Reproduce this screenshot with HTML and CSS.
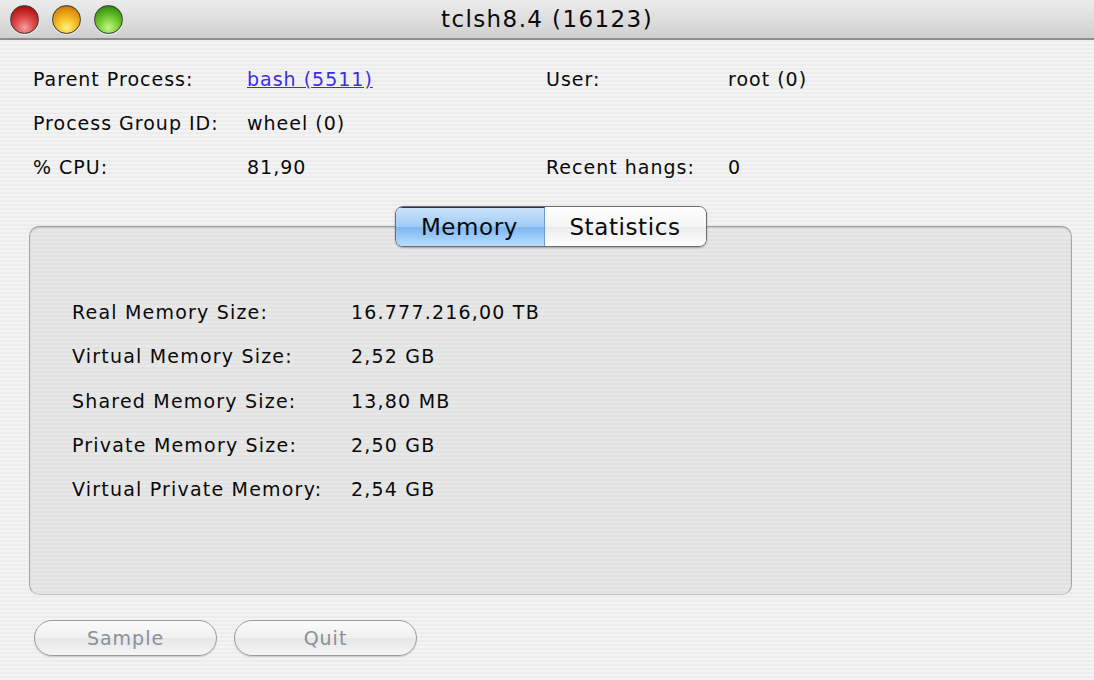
FILE: index.html
```html
<!DOCTYPE html>
<html>
<head>
<meta charset="utf-8">
<link rel="stylesheet" href="styles.css">
</head>
<body>
<div class="window">
  <div class="titlebar">
    <div class="lights">
      <span class="light red"></span>
      <span class="light yellow"></span>
      <span class="light green"></span>
    </div>
    <div class="title">tclsh8.4 (16123)</div>
  </div>
  <div class="content">
    <div class="info">
      <div class="lbl">Parent Process:</div>
      <div class="val"><a class="link" href="#">bash (5511)</a></div>
      <div class="lbl">User:</div>
      <div class="val">root (0)</div>
      <div class="lbl">Process Group ID:</div>
      <div class="val">wheel (0)</div>
      <div class="lbl"></div>
      <div class="val"></div>
      <div class="lbl">% CPU:</div>
      <div class="val">81,90</div>
      <div class="lbl">Recent hangs:</div>
      <div class="val">0</div>
    </div>
    <div class="tabbox">
      <div class="segmented">
        <div class="seg active">Memory</div>
        <div class="seg">Statistics</div>
      </div>
      <div class="memgrid">
        <div>Real Memory Size:</div><div>16.777.216,00 TB</div>
        <div>Virtual Memory Size:</div><div>2,52 GB</div>
        <div>Shared Memory Size:</div><div>13,80 MB</div>
        <div>Private Memory Size:</div><div>2,50 GB</div>
        <div>Virtual Private Memory:</div><div>2,54 GB</div>
      </div>
    </div>
    <div class="buttons">
      <button class="btn">Sample</button>
      <button class="btn">Quit</button>
    </div>
  </div>
</div>
</body>
</html>
```
FILE: styles.css
```css
html, body {
  margin: 0;
  padding: 0;
}
body {
  width: 1094px;
  height: 680px;
  overflow: hidden;
  font-family: "DejaVu Sans", "Liberation Sans", sans-serif;
  color: #0a0a0a;
}
.window {
  width: 1094px;
  height: 680px;
  display: flex;
  flex-direction: column;
  background: repeating-linear-gradient(to bottom, #ededed 0px, #ededed 2px, #f3f3f3 2px, #f3f3f3 4px);
}
.titlebar {
  height: 38px;
  border-bottom: 2px solid #8c8c8c;
  background: linear-gradient(to bottom, #ececec 0%, #dedede 50%, #cfcfcf 100%);
  display: flex;
  align-items: center;
  position: relative;
}
.lights {
  display: flex;
  gap: 13px;
  padding-left: 10px;
}
.light {
  width: 29px;
  height: 29px;
  border-radius: 50%;
  box-sizing: border-box;
  border: 1.5px solid #3a3a3a;
  box-shadow: 0 1px 1px rgba(255,255,255,0.6);
}
.red {
  background: radial-gradient(circle at 50% 80%, #f4a0a0 0%, #e05050 35%, #b81818 75%, #7a0a0a 100%);
}
.yellow {
  background: radial-gradient(circle at 50% 80%, #fff27a 0%, #f7c22a 35%, #d8880a 75%, #8a5200 100%);
}
.green {
  background: radial-gradient(circle at 50% 80%, #c8f58a 0%, #7cd23a 35%, #3e9a12 75%, #1f5a05 100%);
}
.title {
  position: absolute;
  left: 0;
  right: 0;
  top: 0;
  height: 38px;
  line-height: 38px;
  text-align: center;
  font-size: 23px;
  letter-spacing: 1.4px;
  color: #0a0a0a;
  pointer-events: none;
}
.content {
  flex: 1;
  padding: 17px 22px 0 29px;
  display: flex;
  flex-direction: column;
}
.info {
  display: grid;
  grid-template-columns: 214px 299px 182px 1fr;
  grid-auto-rows: 44px;
  align-items: center;
  font-size: 19px;
  letter-spacing: 1px;
  padding-left: 4px;
}
.link {
  color: #3b2fe0;
  text-decoration: underline;
}
.tabbox {
  margin-top: 37px;
  height: 369px;
  border: 1px solid #9a9a9a;
  border-bottom-color: #c4c4c4;
  border-left-color: #a8a8a8;
  border-right-color: #a8a8a8;
  border-radius: 10px;
  background: repeating-linear-gradient(to bottom, #e2e2e2 0px, #e2e2e2 2px, #e8e8e8 2px, #e8e8e8 4px);
  box-shadow: inset 0 1px 2px rgba(0,0,0,0.12);
  position: relative;
  box-sizing: border-box;
  padding: 63px 0 0 42px;
}
.segmented {
  position: absolute;
  top: -21px;
  left: 50%;
  transform: translateX(-50%);
  display: flex;
  height: 41px;
  box-sizing: border-box;
  border: 1px solid #6e6e6e;
  border-radius: 8px;
  overflow: hidden;
  box-shadow: 0 1px 2px rgba(0,0,0,0.3);
  font-size: 23px;
  letter-spacing: 0.6px;
}
.seg {
  display: flex;
  align-items: center;
  justify-content: center;
  background: linear-gradient(to bottom, #ffffff 0%, #f6f6f6 50%, #ebebeb 51%, #ffffff 100%);
  color: #0a0a0a;
}
.seg:first-child {
  width: 148px;
}
.seg:last-child {
  width: 161px;
}
.seg.active {
  background: linear-gradient(to bottom, #cde4fb 0%, #9ccaf5 50%, #7db8f2 51%, #b9ddff 100%);
  border-right: 1px solid #6d9ad0;
  border-top: 1px solid #2a2a8a;
}
.memgrid {
  display: grid;
  grid-template-columns: 279px 1fr;
  grid-auto-rows: 44.3px;
  align-items: center;
  font-size: 19px;
  letter-spacing: 1.2px;
}
.buttons {
  margin-top: 25px;
  display: flex;
  gap: 17px;
  padding-left: 5px;
}
.btn {
  width: 183px;
  height: 36px;
  border-radius: 18px;
  border: 1px solid #9c9c9c;
  background: linear-gradient(to bottom, #fbfbfb 0%, #f0f0f0 50%, #e6e6e6 51%, #f6f6f6 100%);
  box-shadow: 0 1px 1px rgba(0,0,0,0.15);
  font-family: "DejaVu Sans", "Liberation Sans", sans-serif;
  font-size: 19px;
  letter-spacing: 1px;
  color: #8a8f98;
  padding: 0;
}
```
